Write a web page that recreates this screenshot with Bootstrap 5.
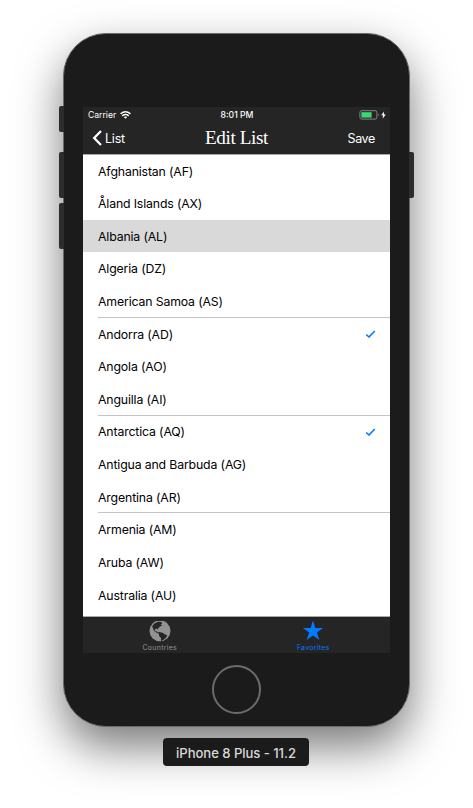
<!DOCTYPE html>
<html lang="en">
<head>
<meta charset="utf-8">
<meta name="viewport" content="width=device-width, initial-scale=1">
<title>Edit List</title>
<link href="https://cdn.jsdelivr.net/npm/bootstrap@5.3.0/dist/css/bootstrap.min.css" rel="stylesheet">
<style>
body{font-family:Inter,"Liberation Sans",sans-serif;width:473px;height:808px;overflow:hidden;background:#fff}
.phone{width:347px;height:694px;margin:33px 0 0 63px;padding:73px 19px 0 19px;border:1px solid #6a6a6a;border-radius:43px;background:#1b1b1b;box-shadow:0 20px 46px rgba(0,0,0,.53)}
.side-key{position:absolute;width:5px;height:46px;left:-5px;background:#2b2c2c;border-radius:2px 0 0 2px}
.key-mute{top:72px;height:26px}
.key-up{top:118px}
.key-down{top:169px}
.key-power{top:118px;left:auto;right:-5px;border-radius:0 2px 2px 0}
.screen{width:307px;height:546px}
.top-area{height:47.6px;border-bottom:1px solid #a8a8a8;background:#252525}
.status{height:15px;padding-left:1px;font-size:8.6px;line-height:16px}
.title-row{height:32px;font-size:12.5px;letter-spacing:-.2px}
.title-row span{position:relative;top:1px}
.save-action{padding-right:15px;letter-spacing:-.35px}
.status,.title-row{display:grid;grid-template-columns:1fr auto 1fr}
.page-title{font:19.2px/29px "Liberation Serif",serif;letter-spacing:-.4px;padding-bottom:2px}
.country{height:32.64px;padding:0 14px 0 0;margin-left:15px;font-size:12.3px;line-height:33px;color:#000;letter-spacing:-.15px}
.picked{background:#d9d9d9;margin-left:0;padding-left:15px}
.ruled{box-shadow:inset 0 -1px #c4c4c7}
.tabs{height:37px;border-top:1px solid #a8a8a8;background:#252525}
.tab-item{color:#929292;font-size:7px;line-height:8px;letter-spacing:.28px}
.tab-item span{margin-top:1px}
.tab-on{color:#007aff}
.home-key{width:49px;height:49px;margin-top:12px;border:2px solid #6c6c6c}
.device-name{width:146px;height:28px;padding-top:3px;margin:11px 0 0 163px;background:#1b1b1b;color:#d9d9d9;font-size:13.1px;border-radius:4px;position:relative;letter-spacing:-.05px}
svg{display:block}
</style>
</head>
<body>
<main class="phone position-relative">
  <i class="side-key key-mute"></i><i class="side-key key-up"></i><i class="side-key key-down"></i><i class="side-key key-power"></i>
  <div class="screen d-flex flex-column bg-white">
    <header class="top-area text-white flex-shrink-0">
      <div class="status">
        <div class="d-flex align-items-center ps-1"><span>Carrier</span>
          <svg class="ms-1" width="11" height="8" viewBox="0 0 11 8" fill="none" stroke="#fff" stroke-width="1.5"><path d="M.6 2.9Q5.5-1.3 10.4 2.9M2.3 4.8Q5.5 2.2 8.7 4.8"/><path d="M3.8 6.1Q5.5 4.8 7.2 6.1L5.5 7.8Z" fill="#fff" stroke="none"/></svg>
        </div>
        <span class="fw-medium">8:01 PM</span>
        <div class="d-flex align-items-center justify-content-end pe-1">
          <svg width="27" height="10" viewBox="0 0 27 10"><rect x=".9" y=".7" width="17" height="8.4" rx="1.8" fill="none" stroke="#858585"/><rect x="2.4" y="2.2" width="10.2" height="5.4" fill="#3bd773"/><path d="M19.5 4v2q1-.3 1-1t-1-1" fill="#858585"/><path d="M25 1.4 22.2 5.3h1.9L23.6 8.7 26.8 4.5h-2Z" fill="#fff"/></svg>
        </div>
      </div>
      <div class="title-row align-items-center">
        <div class="d-flex align-items-center"><svg width="22" height="18" viewBox="0 0 22 18"><path d="M18 2 11.2 9 18 16" fill="none" stroke="#fff" stroke-width="2.3"/></svg><span>List</span></div>
        <h1 class="page-title m-0">Edit List</h1>
        <div class="text-end save-action"><span>Save</span></div>
      </div>
    </header>
    <section class="flex-grow-1 overflow-hidden">
      <div class="country">Afghanistan (AF)</div>
      <div class="country">Åland Islands (AX)</div>
      <div class="country picked">Albania (AL)</div>
      <div class="country">Algeria (DZ)</div>
      <div class="country ruled">American Samoa (AS)</div>
      <div class="country d-flex align-items-center justify-content-between"><span>Andorra (AD)</span><svg width="11" height="8" viewBox="0 0 11 8"><path d="M1.2 4.5 4 7 9.8 1" fill="none" stroke="#007aff" stroke-width="1.6"/></svg></div>
      <div class="country">Angola (AO)</div>
      <div class="country ruled">Anguilla (AI)</div>
      <div class="country d-flex align-items-center justify-content-between"><span>Antarctica (AQ)</span><svg width="11" height="8" viewBox="0 0 11 8"><path d="M1.2 4.5 4 7 9.8 1" fill="none" stroke="#007aff" stroke-width="1.6"/></svg></div>
      <div class="country">Antigua and Barbuda (AG)</div>
      <div class="country ruled">Argentina (AR)</div>
      <div class="country">Armenia (AM)</div>
      <div class="country">Aruba (AW)</div>
      <div class="country">Australia (AU)</div>
    </section>
    <nav class="tabs d-flex flex-shrink-0">
      <div class="tab-item w-50 d-flex flex-column align-items-center pt-1">
        <svg width="22" height="22" viewBox="0 0 22 22"><circle cx="11" cy="9.8" r="10.5" fill="#929292"/><path d="M3.2 5.2 5.4 2.6 9 .8 12.4 1 13.2 2.4 11.6 3.2 13.2 4.4 11 5.4 9.4 7.2 8.8 8.6 7 7.6 5.6 8.8 6.6 10.4 8 10.2 8.6 11.6 10.4 11 13.6 11.8 15.2 13 18.2 14.2 16.8 17 13.4 19.4 12 20 12 17 10 14.8 10 12.8 7.6 11.8 5 9.8 3.8 7Z" fill="#252525"/></svg>
        <span>Countries</span>
      </div>
      <div class="tab-item tab-on w-50 d-flex flex-column align-items-center pt-1">
        <svg width="22" height="22" viewBox="0 0 22 22"><path d="M11-.5 13.4 7H21.2L14.9 11.6 17.3 19.1 11 14.5 4.7 19.1 7.1 11.6.8 7H8.6Z" fill="#007aff"/></svg>
        <span>Favorites</span>
      </div>
    </nav>
  </div>
  <div class="home-key rounded-circle mx-auto"></div>
</main>
<div class="device-name d-flex align-items-center justify-content-center fw-medium">iPhone 8 Plus - 11.2</div>
<script src="https://cdn.jsdelivr.net/npm/bootstrap@5.3.0/dist/js/bootstrap.bundle.min.js"></script>
</body>
</html>
